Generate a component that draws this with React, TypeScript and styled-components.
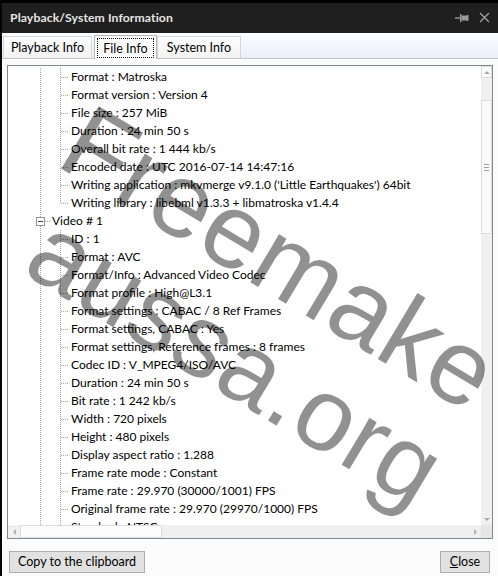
import React from "react";
import styled, { createGlobalStyle, css } from "styled-components";

const GlobalStyle = createGlobalStyle`
  html, body { margin: 0; padding: 0; background: #ffffff; overflow: hidden; }
  #root { width: 498px; height: 576px; }
`;

const UI_FONT = `"Segoe UI", Lato, "Noto Sans", sans-serif`;

const Window = styled.div`
  position: relative;
  width: 498px;
  height: 576px;
  box-sizing: border-box;
  border-left: 2px solid #050505;
  border-top: 3px solid #000000;
  background: #fbfbfb;
  display: flex;
  flex-direction: column;
  overflow: hidden;
  font-family: ${UI_FONT};
  color: #000;
`;

const TitleBar = styled.div`
  height: 30px;
  flex: none;
  box-sizing: border-box;
  background: #1f1f1f;
  display: flex;
  align-items: center;
  padding: 0 8px 1px 8px;
  gap: 10px;
`;

const Title = styled.div`
  flex: 1;
  color: #e6e6e6;
  font-weight: 700;
  font-size: 12.2px;
  letter-spacing: 0.1px;
`;

const TitleIcon = styled.svg`
  display: block;
  flex: none;
`;

const TabStrip = styled.div`
  height: 26px;
  flex: none;
  box-sizing: border-box;
  background: linear-gradient(#fcfdff, #eceef9);
  border-bottom: 1px solid #c3c6d2;
  display: flex;
  align-items: flex-end;
  padding-left: 1px;
`;

const Tab = styled.div<{ $w: number; $active?: boolean }>`
  width: ${(p) => p.$w}px;
  box-sizing: border-box;
  display: flex;
  align-items: center;
  justify-content: center;
  font-size: 12.5px;
  ${(p) =>
    p.$active
      ? css`
          height: 24px;
          margin: 0 0 -1px 2px;
          background: #ffffff;
          border: 1px solid #b6b6b6;
          border-bottom: none;
          padding: 2px 2px 1px 2px;
        `
      : css`
          height: 22px;
          padding-bottom: 1px;
          background: linear-gradient(#fdfdfd, #f3f3f3);
          border: 1px solid #d6d6d6;
          border-bottom: none;
        `}
`;

const FocusRect = styled.span`
  flex: 1;
  align-self: stretch;
  display: flex;
  align-items: center;
  justify-content: center;
  outline: 1px dotted #111;
  outline-offset: -1px;
`;

const Content = styled.div`
  flex: none;
  padding: 6px 5px 0 5px;
`;

const TreeBox = styled.div`
  height: 474px;
  box-sizing: border-box;
  border: 1px solid #828790;
  background: #ffffff;
  display: grid;
  grid-template-columns: 1fr 11px;
  grid-template-rows: 1fr 13px;
`;

const Viewport = styled.div`
  overflow: hidden;
  padding-top: 2px;
  position: relative;
`;

const Row = styled.div`
  display: flex;
  align-items: center;
  height: 18px;
  padding-left: 22px;
  white-space: nowrap;
`;

type Guide = "pipe" | "tee" | "elbow" | "node";

const vDots = `repeating-linear-gradient(to bottom, #a3a3a3 0 1px, transparent 1px 2px)`;
const hDots = `repeating-linear-gradient(to right, #a3a3a3 0 1px, transparent 1px 2px)`;

const Cell = styled.span<{ $kind: Guide }>`
  position: relative;
  flex: none;
  width: 20px;
  height: 18px;
  &::before {
    content: "";
    position: absolute;
    left: 10px;
    top: 0;
    width: 1px;
    height: ${(p) => (p.$kind === "elbow" ? 10 : 18)}px;
    background: ${vDots};
  }
  ${(p) =>
    p.$kind !== "pipe" &&
    css`
      &::after {
        content: "";
        position: absolute;
        left: ${p.$kind === "node" ? 15 : 11}px;
        top: 9px;
        width: ${p.$kind === "node" ? 5 : 8}px;
        height: 1px;
        background: ${hDots};
      }
    `}
`;

const ExpandBox = styled.span`
  position: absolute;
  left: 6px;
  top: 5px;
  width: 9px;
  height: 9px;
  box-sizing: border-box;
  border: 1px solid #969696;
  background: #ffffff;
  z-index: 1;
  &::after {
    content: "";
    position: absolute;
    left: 1px;
    top: 3px;
    width: 5px;
    height: 1px;
    background: #404040;
  }
`;

const Label = styled.span<{ $node?: boolean }>`
  padding-left: ${(p) => (p.$node ? 2 : 1)}px;
  font-size: 12px;
  line-height: 18px;
`;

const VScroll = styled.div`
  display: flex;
  flex-direction: column;
  background: #f0f0f0;
`;

const HScroll = styled.div`
  display: flex;
  align-items: stretch;
  background: #f0f0f0;
`;

const Corner = styled.div`
  background: #e6e6e6;
`;

const ArrowBtn = styled.div<{ $dir: "up" | "down" | "left" | "right"; $size: number; $framed?: boolean }>`
  flex: none;
  ${(p) => (p.$dir === "up" || p.$dir === "down" ? `height: ${p.$size}px;` : `width: ${p.$size}px;`)}
  box-sizing: border-box;
  display: flex;
  align-items: center;
  justify-content: center;
  background: ${(p) => (p.$framed ? "#ffffff" : "transparent")};
  border: ${(p) => (p.$framed ? "1px solid #dadada" : "none")};
  &::after {
    content: "";
    width: 0;
    height: 0;
    ${(p) =>
      p.$dir === "up"
        ? "border-left: 3px solid transparent; border-right: 3px solid transparent; border-bottom: 3px solid #a8a8a8;"
        : p.$dir === "down"
        ? "border-left: 3px solid transparent; border-right: 3px solid transparent; border-top: 3px solid #a8a8a8;"
        : p.$dir === "left"
        ? "border-top: 3px solid transparent; border-bottom: 3px solid transparent; border-right: 3px solid #b0b0b0;"
        : "border-top: 3px solid transparent; border-bottom: 3px solid transparent; border-left: 3px solid #b0b0b0;"}
  }
`;

const Track = styled.div<{ $len: number }>`
  flex: none;
  height: ${(p) => p.$len}px;
`;

const Spacer = styled.div`
  flex: 1;
`;

const VThumb = styled.div`
  flex: none;
  height: 134px;
  box-sizing: border-box;
  border: 1px solid #dcdcdc;
  background: #fafafa;
  display: flex;
  flex-direction: column;
  align-items: center;
  justify-content: center;
  gap: 2px;
`;

const Grip = styled.span`
  width: 5px;
  height: 1px;
  background: #a0a0a0;
`;

const HThumb = styled.div`
  flex: none;
  width: 142px;
  box-sizing: border-box;
  border: 1px solid #dcdcdc;
  background: #fcfcfc;
`;

const Footer = styled.div`
  flex: 1;
  display: flex;
  justify-content: space-between;
  align-items: flex-start;
  padding: 12px 8px 0 7px;
`;

const Button = styled.button<{ $w: number }>`
  width: ${(p) => p.$w}px;
  height: 22px;
  box-sizing: border-box;
  border: 1px solid #adadad;
  background: #e1e1e1;
  font-family: ${UI_FONT};
  font-size: 12.5px;
  color: #000;
  padding: 0 0 1px 0;
  display: flex;
  align-items: center;
  justify-content: center;
`;

const Watermark = styled.div`
  position: absolute;
  inset: 0;
  pointer-events: none;
  z-index: 5;
`;

const MarkText = styled.span<{ $x: number; $y: number; $deg: number; $size: number }>`
  position: absolute;
  left: ${(p) => p.$x}px;
  top: ${(p) => p.$y}px;
  transform-origin: 0 0;
  transform: rotate(${(p) => p.$deg}deg);
  font-family: "Liberation Sans", Arial, sans-serif;
  font-size: ${(p) => p.$size}px;
  line-height: 1;
  letter-spacing: 1px;
  color: rgba(0, 0, 0, 0.43);
  white-space: nowrap;
`;

type Item = { text: string; guides: Guide[]; node?: boolean };

const general: string[] = [
  "Format : Matroska",
  "Format version : Version 4",
  "File size : 257 MiB",
  "Duration : 24 min 50 s",
  "Overall bit rate : 1 444 kb/s",
  "Encoded date : UTC 2016-07-14 14:47:16",
  "Writing application : mkvmerge v9.1.0 ('Little Earthquakes') 64bit",
  "Writing library : libebml v1.3.3 + libmatroska v1.4.4",
];

const video: string[] = [
  "ID : 1",
  "Format : AVC",
  "Format/Info : Advanced Video Codec",
  "Format profile : High@L3.1",
  "Format settings : CABAC / 8 Ref Frames",
  "Format settings, CABAC : Yes",
  "Format settings, Reference frames : 8 frames",
  "Codec ID : V_MPEG4/ISO/AVC",
  "Duration : 24 min 50 s",
  "Bit rate : 1 242 kb/s",
  "Width : 720 pixels",
  "Height : 480 pixels",
  "Display aspect ratio : 1.288",
  "Frame rate mode : Constant",
  "Frame rate : 29.970 (30000/1001) FPS",
  "Original frame rate : 29.970 (29970/1000) FPS",
  "Standard : NTSC",
];

const items: Item[] = [
  ...general.map((t, i) => ({
    text: t,
    guides: ["pipe", i === general.length - 1 ? "elbow" : "tee"] as Guide[],
  })),
  { text: "Video # 1", guides: ["node"], node: true },
  ...video.map((t) => ({ text: t, guides: ["pipe", "tee"] as Guide[] })),
];

export default function App() {
  return (
    <>
      <GlobalStyle />
      <Window>
        <TitleBar>
          <Title>Playback/System Information</Title>
          <TitleIcon width="14" height="10" viewBox="0 0 14 10">
            <line x1="0" y1="5" x2="5" y2="5" stroke="#9a9a9a" strokeWidth="1.4" />
            <rect x="5" y="1" width="1.5" height="8" fill="#9a9a9a" />
            <rect x="6.5" y="2.5" width="6" height="5" fill="#9a9a9a" />
            <rect x="12" y="2" width="1.5" height="6" fill="#9a9a9a" />
          </TitleIcon>
          <TitleIcon width="11" height="11" viewBox="0 0 11 11">
            <path d="M1 1 L10 10 M10 1 L1 10" stroke="#a0a0a0" strokeWidth="1.3" />
          </TitleIcon>
        </TitleBar>
        <TabStrip>
          <Tab $w={89}>Playback Info</Tab>
          <Tab $w={63} $active>
            <FocusRect>File Info</FocusRect>
          </Tab>
          <Tab $w={84}>System Info</Tab>
        </TabStrip>
        <Content>
          <TreeBox>
            <Viewport>
              {items.map((it, i) => (
                <Row key={i}>
                  {it.guides.map((g, j) => (
                    <Cell key={j} $kind={g}>
                      {g === "node" && <ExpandBox />}
                    </Cell>
                  ))}
                  <Label $node={it.node}>{it.text}</Label>
                </Row>
              ))}
            </Viewport>
            <VScroll>
              <ArrowBtn $dir="up" $size={12} $framed />
              <Track $len={22} />
              <VThumb>
                <Grip />
                <Grip />
                <Grip />
              </VThumb>
              <Spacer />
              <ArrowBtn $dir="down" $size={11} />
            </VScroll>
            <HScroll>
              <ArrowBtn $dir="left" $size={12} />
              <HThumb />
              <Spacer />
              <ArrowBtn $dir="right" $size={11} />
            </HScroll>
            <Corner />
          </TreeBox>
        </Content>
        <Footer>
          <Button $w={136}>Copy to the clipboard</Button>
          <Button $w={50}>
            <u>C</u>lose
          </Button>
        </Footer>
        <Watermark>
          <MarkText $x={98} $y={84} $deg={31} $size={106}>
            Freemake
          </MarkText>
          <MarkText $x={63} $y={194} $deg={31} $size={103}>
            aussa.org
          </MarkText>
        </Watermark>
      </Window>
    </>
  );
}
